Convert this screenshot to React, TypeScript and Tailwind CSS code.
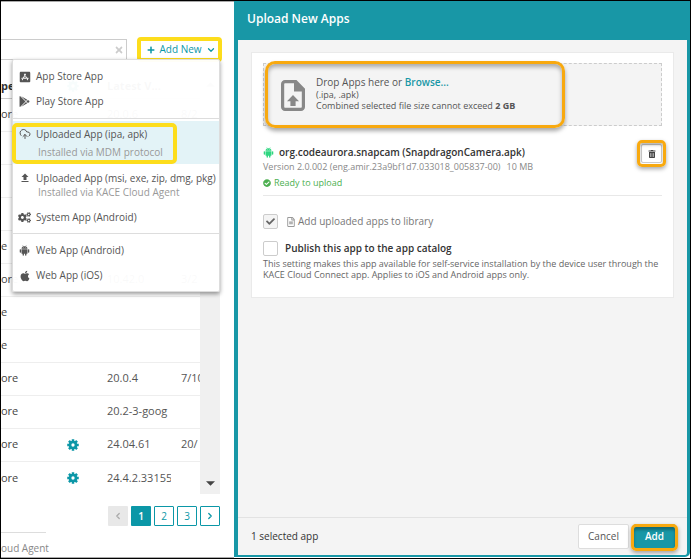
import type { ReactNode } from "react";
import {
  FaApple,
  FaAppStoreIos,
  FaCheck,
  FaCheckCircle,
  FaCogs,
  FaGooglePlay,
  FaPlus,
  FaRegFileAlt,
  FaTimes,
  FaTrashAlt,
} from "react-icons/fa";
import { MdFileUpload } from "react-icons/md";
import { ChevronDown, ChevronLeft, ChevronRight, CloudUpload } from "lucide-react";

type Row = { type: string; gear?: boolean; version?: string; date?: string };

const rows: Row[] = [
  { type: "ore", version: "20.0.6", date: "8/2" },
  { type: "" },
  { type: "" },
  { type: "" },
  { type: "e" },
  { type: "ore", version: "10.42.0", date: "3/2" },
  { type: "e" },
  { type: "e" },
  { type: "ore", version: "20.0.4", date: "7/10" },
  { type: "ore", version: "20.2-3-goog" },
  { type: "ore", gear: true, version: "24.04.61", date: "20/" },
  { type: "ore", gear: true, version: "24.4.2.33155" },
];

function Gear() {
  return (
    <svg className="mx-auto size-3 text-[#0b97a7]" viewBox="0 0 24 24" fill="none" stroke="currentColor">
      <circle cx="12" cy="12" r="6" strokeWidth="5.4" />
      <path
        d="M12 .5v5M12 18.5v5M.5 12h5M18.500 12h5M3.900 3.900l3.500 3.500M16.600 16.600l3.500 3.500M3.900 20.100l3.500-3.500M16.600 7.400l3.500-3.500"
        strokeWidth="5"
      />
    </svg>
  );
}

function Robot({ className }: { className: string }) {
  return (
    <svg className={className} viewBox="0 0 24 24" fill="currentColor">
      <path d="M5.500 8.200a6.500 5.600 0 0 1 13 0zM5.500 9.200h13v8.600a1.400 1.400 0 0 1-1.400 1.400H6.900a1.400 1.400 0 0 1-1.400-1.400z" />
      <rect x="1.600" y="9" width="3" height="8" rx="1.500" />
      <rect x="19.400" y="9" width="3" height="8" rx="1.500" />
      <rect x="7.800" y="16" width="3" height="7.500" rx="1.500" />
      <rect x="13.200" y="16" width="3" height="7.500" rx="1.500" />
      <path d="M8 .8l2 3.400M16 .8l-2 3.400" stroke="currentColor" />
      <circle cx="9.200" cy="5.800" r=".8" fill="#fff" />
      <circle cx="14.800" cy="5.800" r=".8" fill="#fff" />
    </svg>
  );
}

function AppsTable() {
  return (
    <div className="mt-3 mr-[14px] flex">
      <div className="min-w-0 flex-1 overflow-hidden">
        <table className="w-full table-fixed border-collapse text-left text-[11px] text-[#555]">
          <thead>
            <tr className="h-6 border-b border-[#ccc] text-[#333]">
              <th className="w-[54px] font-bold">pe</th>
              <th className="w-9">
                <Gear />
              </th>
              <th className="w-20 pl-4 font-bold whitespace-nowrap">Latest V...</th>
              <th />
            </tr>
          </thead>
          <tbody>
            {rows.map((row, i) => (
              <tr key={i} className="h-[33px] border-b border-[#eee] last:border-b-0">
                <td className="text-[#444]">{row.type}</td>
                <td>{row.gear && <Gear />}</td>
                <td className="pl-4">
                  <div className="overflow-hidden whitespace-nowrap">{row.version}</div>
                </td>
                <td className="pl-[10px]">
                  <div className="overflow-hidden whitespace-nowrap">{row.date}</div>
                </td>
              </tr>
            ))}
          </tbody>
        </table>
      </div>
      <div className="flex w-5 flex-col items-center justify-between bg-[#f0f0f0] py-2">
        <svg className="h-[5px] w-[9px] fill-[#aaa]" viewBox="0 0 10 5">
          <path d="M0 5h10L5 0z" />
        </svg>
        <svg className="h-[5px] w-[9px] fill-[#444]" viewBox="0 0 10 5">
          <path d="M0 0h10L5 5z" />
        </svg>
      </div>
    </div>
  );
}

function Pagination() {
  const page =
    "flex size-5 items-center justify-center rounded-[1px] border border-[#0b97a7] text-[10px] text-[#0b97a7]";
  return (
    <nav className="mt-3 mr-[14px] flex justify-end gap-[3px]">
      <button
        aria-label="Previous page"
        className="flex size-5 items-center justify-center rounded-[1px] bg-[#e8e8e8] text-[#aaa]"
      >
        <ChevronLeft className="size-[10px]" strokeWidth={3} />
      </button>
      <button className="size-5 rounded-[1px] bg-[#0b97a7] text-[10px] font-semibold text-white">1</button>
      <button className={page}>2</button>
      <button className={page}>3</button>
      <button aria-label="Next page" className={page}>
        <ChevronRight className="size-[10px]" strokeWidth={3} />
      </button>
    </nav>
  );
}

function MenuItem({ icon, label }: { icon: ReactNode; label: string }) {
  return (
    <button className="flex h-[25px] w-full items-center">
      <span className="flex w-[23px] justify-center">{icon}</span>
      {label}
    </button>
  );
}

function AddMenu() {
  return (
    <div className="absolute top-[57px] left-[11px] w-[208px] rounded-[2px] border border-[#ddd] bg-white/97 pt-1 pb-[3px] text-left text-[10px] text-[#555] shadow-[0_2px_4px_rgba(0,0,0,0.4)]">
      <MenuItem icon={<FaAppStoreIos className="size-3" />} label="App Store App" />
      <MenuItem icon={<FaGooglePlay className="size-[11px]" />} label="Play Store App" />
      <hr className="mt-1 mb-[2px] border-[#ddd]" />
      <button className="relative flex w-full bg-[#e3f3f7] pt-[6px] pb-[5px] text-left">
        <span className="flex h-[14px] w-[23px] items-center justify-center">
          <CloudUpload className="size-3" />
        </span>
        <span>
          <span className="block leading-[14px]">Uploaded App (ipa, apk)</span>
          <span className="mt-1 block pl-[2px] leading-[14px] text-[#999]">Installed via MDM protocol</span>
        </span>
        <span className="absolute -left-px top-[2px] h-[41px] w-[165px] rounded-[5px] border-4 border-[#fddd1c]" />
      </button>
      <button className="flex w-full pt-[7px] pb-[6px] text-left">
        <span className="flex h-[14px] w-[23px] items-center justify-center">
          <MdFileUpload className="size-3" />
        </span>
        <span className="whitespace-nowrap">
          <span className="block leading-[14px]">Uploaded App (msi, exe, zip, dmg, pkg)</span>
          <span className="block pl-[2px] leading-[14px] text-[#999]">Installed via KACE Cloud Agent</span>
        </span>
      </button>
      <MenuItem icon={<FaCogs className="size-[13px]" />} label="System App (Android)" />
      <hr className="mt-[3px] mb-1 border-[#ddd]" />
      <MenuItem icon={<Robot className="size-[11px]" />} label="Web App (Android)" />
      <MenuItem icon={<FaApple className="size-3" />} label="Web App (iOS)" />
    </div>
  );
}

function AppsPane() {
  return (
    <section className="relative w-[233px] shrink-0 overflow-hidden border-y border-[#aaa] bg-white">
      <div className="flex items-center gap-[10px] pt-[35px] pr-3">
        <div className="relative min-w-0 flex-1">
          <input
            aria-label="Search apps"
            className="block h-[21px] w-full border border-l-0 border-[#ccc] bg-white px-2 text-[10px]"
          />
          <FaTimes className="absolute top-[6px] right-[3px] size-[10px] text-[#ccc]" />
        </div>
        <button className="flex h-[25px] w-[85px] items-center justify-center gap-1 rounded-[4px] border-4 border-[#fddd1c] pl-1 text-[10px] whitespace-nowrap text-[#0b97a7]">
          <FaPlus className="size-2" />
          Add New
          <ChevronDown className="size-[10px]" strokeWidth={3} />
        </button>
      </div>
      <AppsTable />
      <Pagination />
      <footer className="mt-[6px] w-[45px] border-t border-[#ddd] pt-2 text-[10px] leading-[14px] whitespace-nowrap text-[#888]">
        oud Agent
      </footer>
      <AddMenu />
    </section>
  );
}

function DropZone() {
  return (
    <div className="relative flex h-[63px] items-center gap-[11px] border border-dashed border-[#ccc] bg-[#f4f4f4] pb-[2px] pl-[17px]">
      <svg className="mt-1 h-[31px] w-6 shrink-0" viewBox="0 0 24 31">
        <path
          d="M4 1.600h10.800L22.400 9.400V27a2.400 2.400 0 0 1-2.400 2.400H4A2.400 2.400 0 0 1 1.600 27V4A2.400 2.400 0 0 1 4 1.600z"
          fill="none"
          stroke="#888"
          strokeWidth="3.2"
        />
        <path d="M13 1v10.500h10.500V9L15 1z" fill="#888" />
        <path d="M12 15l6 6.200h-3.400V26H9.400v-4.800H6z" fill="#888" />
      </svg>
      <div className="text-[9px] leading-[11px] text-[#555]">
        <p className="text-[10px] leading-[13px] font-medium">
          Drop Apps here or{" "}
          <a href="#browse" className="font-semibold text-[#1897a6]">
            Browse...
          </a>
        </p>
        <p>(.ipa, .apk)</p>
        <p>
          Combined selected file size cannot exceed <b>2 GB</b>
        </p>
      </div>
      <span className="pointer-events-none absolute -top-[3px] left-px h-[67px] w-[300px] rounded-[10px] border-[3px] border-[#f8a90f] shadow-[0_3px_4px_rgba(0,0,0,0.35),inset_0_3px_4px_rgba(0,0,0,0.3)]" />
    </div>
  );
}

function UploadDialog() {
  return (
    <section className="mb-px flex min-w-0 flex-1 flex-col rounded-br-[5px] border-r-[3px] border-b-2 border-l-4 border-[#1897a6] bg-[#f4f4f4]">
      <h1 className="h-[39px] bg-[#1897a6] pt-[10px] pl-[9px] text-[12px] leading-4 font-semibold text-white">
        Upload New Apps
      </h1>
      <div className="flex-1 px-[13px] pt-3">
        <div className="border border-[#eaeaea] bg-white px-[11px] pt-[10px] pb-[17px]">
          <DropZone />
          <div className="mt-[18px] flex items-start justify-between border-b border-[#e8e8e8] pb-[6px] text-[9px]">
            <div>
              <p className="flex items-center gap-[5px] text-[10px] leading-4 font-semibold text-[#333]">
                <Robot className="size-[11px] text-[#2fd680]" />
                org.codeaurora.snapcam (SnapdragonCamera.apk)
              </p>
              <p className="mt-px leading-3 text-[#888]">
                Version 2.0.002 (eng.amir.23a9bf1d7.033018_005837-00)
                <span className="ml-[6px]">10 MB</span>
              </p>
              <p className="mt-1 flex items-center gap-[3px] leading-3 text-[#4caf50]">
                <FaCheckCircle className="size-2" />
                Ready to upload
              </p>
            </div>
            <button
              aria-label="Remove app"
              className="relative flex h-[19px] w-[21px] items-center justify-center rounded-[2px] border border-[#ccc] bg-white text-[#444]"
            >
              <FaTrashAlt className="size-2" />
              <span className="absolute -inset-[5px] rounded-[5px] border-[3px] border-[#f8a90f] shadow-[0_2px_4px_rgba(0,0,0,0.35),inset_0_2px_3px_rgba(0,0,0,0.3)]" />
            </button>
          </div>
          <div className="mt-[18px] flex items-center text-[10px] leading-[15px] font-medium text-[#777]">
            <span className="relative mr-2 size-[15px]">
              <input
                id="library"
                type="checkbox"
                checked
                disabled
                readOnly
                className="block size-[15px] appearance-none rounded-[2px] border border-[#ccc] bg-[#f4f4f4]"
              />
              <FaCheck className="pointer-events-none absolute top-[3px] left-[3px] size-[9px] text-[#666]" />
            </span>
            <label htmlFor="library" className="flex items-center gap-[2px]">
              <FaRegFileAlt className="size-[10px] text-[#999]" />
              Add uploaded apps to library
            </label>
          </div>
          <div className="mt-3 flex items-center gap-[7px] text-[10px] leading-[15px] font-semibold text-[#333]">
            <input
              id="publish"
              type="checkbox"
              className="block size-[15px] appearance-none rounded-[2px] border border-[#ccc] bg-white"
            />
            <label htmlFor="publish">Publish this app to the app catalog</label>
          </div>
          <p className="mt-[2px] text-[9px] leading-[11px] text-[#666]">
            This setting makes this app available for self-service installation by the device user through the KACE
            Cloud Connect app. Applies to iOS and Android apps only.
          </p>
        </div>
      </div>
      <footer className="flex h-[38px] items-center border-t border-[#e2e2e2] pr-3 pl-[13px] text-[10px]">
        <span className="flex-1 font-medium text-[#333]">1 selected app</span>
        <button className="h-[25px] w-[51px] rounded-[2px] border border-[#ddd] bg-white font-medium text-[#555]">
          Cancel
        </button>
        <button className="relative ml-[5px] h-[25px] w-[41px] rounded-[2px] bg-[#1897a6] font-semibold text-white">
          Add
          <span className="absolute -inset-x-[3px] top-0 -bottom-[2px] rounded-[5px] border-[3px] border-[#f8a90f] shadow-[0_2px_4px_rgba(0,0,0,0.35),inset_0_3px_3px_rgba(0,0,0,0.3)]" />
        </button>
      </footer>
    </section>
  );
}

export default function App() {
  return (
    <main className="flex min-h-screen border border-black bg-white font-['Open_Sans','Noto_Sans',sans-serif]">
      <AppsPane />
      <UploadDialog />
    </main>
  );
}
